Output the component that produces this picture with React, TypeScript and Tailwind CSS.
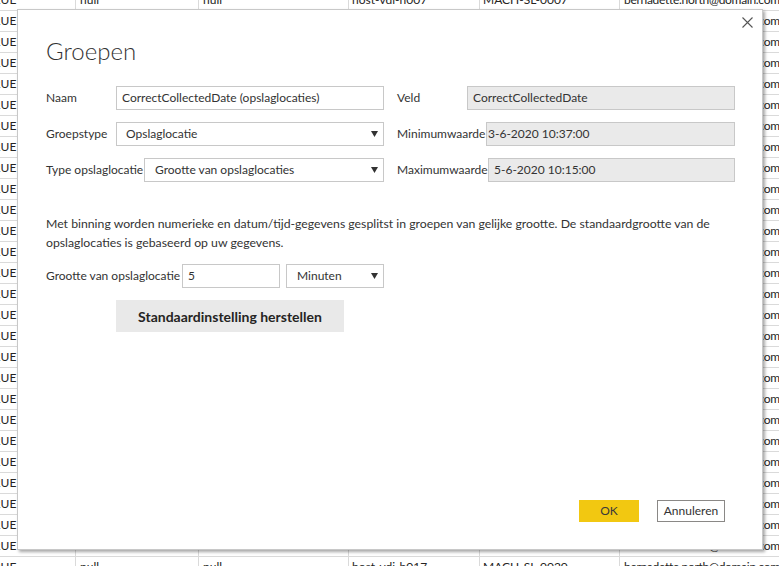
import React from "react";

const rows = Array.from({ length: 28 }, (_, i) => i);

const Arrow = () => (
  <svg width="7" height="6" viewBox="0 0 7 6" className="shrink-0">
    <path d="M0 0h7L3.5 6z" fill="#333" />
  </svg>
);

const TableBg = () => (
  <div className="-mt-[10px] -ml-[18px] flex flex-col text-[12px] text-[#252423]">
    {rows.map((i) => (
      <div key={i} className="flex h-[21px] shrink-0 items-center border-b border-[#dadada] whitespace-nowrap">
        <div className="box-border flex h-full w-[94px] shrink-0 items-center overflow-hidden border-r border-[#dadada] pl-[4px]">TRUE</div>
        <div className="box-border flex h-full w-[123px] shrink-0 items-center overflow-hidden border-r border-[#dadada] pl-[4px]">null</div>
        <div className="box-border flex h-full w-[150px] shrink-0 items-center overflow-hidden border-r border-[#dadada] pl-[4px]">null</div>
        <div className="box-border flex h-full w-[131px] shrink-0 items-center overflow-hidden border-r border-[#dadada] pl-[3px]">
          {i === 27 ? "host-vdi-h017" : "host-vdi-h007"}
        </div>
        <div className="box-border flex h-full w-[140px] shrink-0 items-center overflow-hidden border-r border-[#dadada] pl-[3px]">
          {i === 27 ? "MACH-SL-0020" : "MACH-SL-0007"}
        </div>
        <div className="flex h-full w-[200px] shrink-0 items-center overflow-hidden pl-[4px] tracking-[-0.3px]">
          bernadette.north@domain.com
        </div>
      </div>
    ))}
  </div>
);

export default function App() {
  return (
    <div className="relative h-[566px] w-[779px] overflow-hidden bg-white font-['Lato',sans-serif]">
      <TableBg />

      <div className="absolute left-[17px] top-[9px] box-border flex h-[541px] w-[746px] flex-col border border-[#c8c8c8] bg-white pl-[28px] pr-[27px] pt-[25px] text-[12px] text-[#333] shadow-[2px_2px_3px_rgba(0,0,0,0.35)]">
        <button className="absolute left-[724px] top-[7px] h-[11px] w-[11px]" aria-label="Sluiten">
          <svg width="11" height="11" viewBox="0 0 11 11">
            <path d="M0.5 0.5l10 10M10.5 0.5l-10 10" stroke="#555" strokeWidth="1.1" />
          </svg>
        </button>

        <h1 className="text-[24px] font-light leading-[32px] text-[#333]">Groepen</h1>

        <div className="mt-[19px] grid grid-cols-2 gap-x-[13px] gap-y-[12px]">
          <div className="flex h-[24px] items-center">
            <span className="w-[70px] shrink-0 whitespace-nowrap">Naam</span>
            <div className="box-border flex h-full flex-1 items-center border border-[#c8c8c8] pl-[5px]">
              CorrectCollectedDate (opslaglocaties)
            </div>
          </div>
          <div className="flex h-[24px] items-center">
            <span className="w-[70px] shrink-0 whitespace-nowrap">Veld</span>
            <div className="box-border flex h-full flex-1 items-center border border-[#c8c8c8] bg-[#eaeaea] pl-[5px]">
              CorrectCollectedDate
            </div>
          </div>

          <div className="flex h-[24px] items-center">
            <span className="w-[70px] shrink-0 whitespace-nowrap">Groepstype</span>
            <div className="box-border flex h-full flex-1 items-center justify-between border border-[#c8c8c8] pl-[9px] pr-[5px]">
              <span>Opslaglocatie</span>
              <Arrow />
            </div>
          </div>
          <div className="flex h-[24px] items-center">
            <span className="w-[89px] shrink-0 whitespace-nowrap">Minimumwaarde</span>
            <div className="box-border flex h-full flex-1 items-center border border-[#c8c8c8] bg-[#eaeaea] pl-[1px]">
              3-6-2020 10:37:00
            </div>
          </div>

          <div className="flex h-[24px] items-center">
            <span className="w-[98px] shrink-0 whitespace-nowrap">Type opslaglocatie</span>
            <div className="box-border flex h-full flex-1 items-center justify-between border border-[#c8c8c8] pl-[10px] pr-[5px]">
              <span>Grootte van opslaglocaties</span>
              <Arrow />
            </div>
          </div>
          <div className="flex h-[24px] items-center">
            <span className="w-[91px] shrink-0 whitespace-nowrap">Maximumwaarde</span>
            <div className="box-border flex h-full flex-1 items-center border border-[#c8c8c8] bg-[#eaeaea] pl-[5px]">
              5-6-2020 10:15:00
            </div>
          </div>
        </div>

        <p className="mt-[32px] whitespace-nowrap text-[12.25px] leading-[19px]">
          Met binning worden numerieke en datum/tijd-gegevens gesplitst in groepen van gelijke grootte. De standaardgrootte van de
          <br />
          opslaglocaties is gebaseerd op uw gegevens.
        </p>

        <div className="mt-[12px] flex h-[24px] items-center">
          <span className="w-[136px] shrink-0 whitespace-nowrap">Grootte van opslaglocatie</span>
          <div className="box-border flex h-full w-[98px] items-center border border-[#c8c8c8] pl-[5px]">5</div>
          <div className="ml-[6px] box-border flex h-full w-[98px] items-center justify-between border border-[#c8c8c8] pl-[10px] pr-[5px]">
            <span>Minuten</span>
            <Arrow />
          </div>
        </div>

        <button className="ml-[70px] mt-[12px] h-[32px] w-[228px] bg-[#e9e9e9] text-[14px] font-bold text-[#252423]">
          Standaardinstelling herstellen
        </button>

        <div className="mt-auto flex justify-end gap-[18px] pb-[27px] pr-[10px]">
          <button className="h-[22px] w-[60px] bg-[#f2c811] text-[12px] text-[#3b3a39]">OK</button>
          <button className="box-border h-[22px] w-[68px] border border-[#8a8886] bg-white text-[12px] text-[#333]">
            Annuleren
          </button>
        </div>
      </div>
    </div>
  );
}
